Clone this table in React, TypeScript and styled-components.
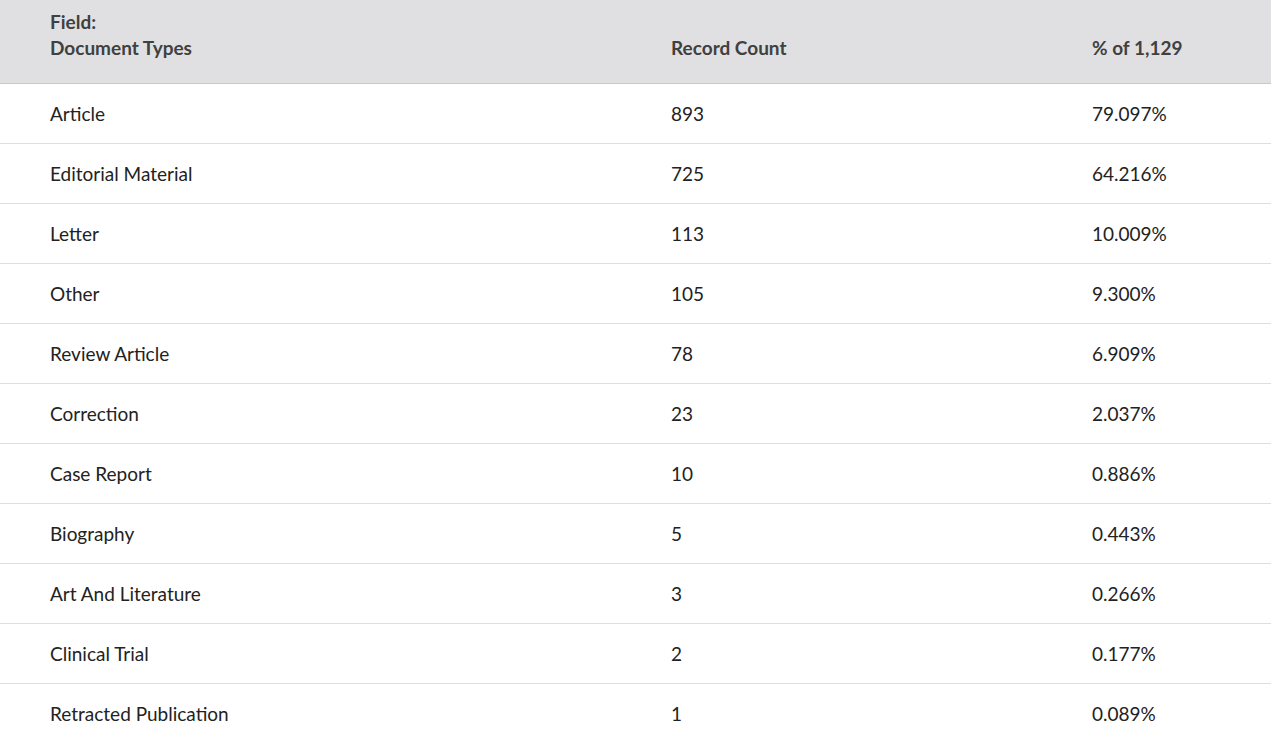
import { Fragment } from 'react';
import styled, { createGlobalStyle } from 'styled-components';

const GlobalStyle = createGlobalStyle`
  body {
    margin: 0;
    background: #fff;
    font-family: Lato, "Source Sans Pro", "Noto Sans", sans-serif;
  }
`

interface IRow {
  type: string;
  count: number;
  percent: string;
}

const rows: IRow[] = [
  { type: 'Article', count: 893, percent: '79.097%' },
  { type: 'Editorial Material', count: 725, percent: '64.216%' },
  { type: 'Letter', count: 113, percent: '10.009%' },
  { type: 'Other', count: 105, percent: '9.300%' },
  { type: 'Review Article', count: 78, percent: '6.909%' },
  { type: 'Correction', count: 23, percent: '2.037%' },
  { type: 'Case Report', count: 10, percent: '0.886%' },
  { type: 'Biography', count: 5, percent: '0.443%' },
  { type: 'Art And Literature', count: 3, percent: '0.266%' },
  { type: 'Clinical Trial', count: 2, percent: '0.177%' },
  { type: 'Retracted Publication', count: 1, percent: '0.089%' },
];

const Table = styled.div`
  width: 100%;
  display: grid;
  grid-template-columns: 621px 421px 1fr;
`

const HeadCell = styled.div`
  background: #e0e0e3;
  border-bottom: 1px solid #c9c9cc;
  color: #404040;
  font-weight: 700;
  font-size: 19px;
  line-height: 26px;
  height: 84px;
  padding: 9px 0 0 50px;
  box-sizing: border-box;
  display: flex;
  flex-direction: column;
  justify-content: flex-start;
`

const HeadLabel = styled.span<{ $low?: boolean }>`
  margin-top: ${(p) => (p.$low ? '26px' : '0')};
`

const Cell = styled.div`
  height: 60px;
  box-sizing: border-box;
  border-bottom: 1px solid #dedede;
  padding: 0 0 0 50px;
  display: flex;
  align-items: center;
  color: #222;
  font-size: 19px;
`

const App: React.FC = () => {
  return (
    <>
      <GlobalStyle />
      <Table>
        <HeadCell>
          <HeadLabel>Field:</HeadLabel>
          <HeadLabel>Document Types</HeadLabel>
        </HeadCell>
        <HeadCell>
          <HeadLabel $low>Record Count</HeadLabel>
        </HeadCell>
        <HeadCell>
          <HeadLabel $low>% of 1,129</HeadLabel>
        </HeadCell>
        {rows.map((r) => (
          <Fragment key={r.type}>
            <Cell>{r.type}</Cell>
            <Cell>{r.count}</Cell>
            <Cell>{r.percent}</Cell>
          </Fragment>
        ))}
      </Table>
    </>
  )
}

export default App;
